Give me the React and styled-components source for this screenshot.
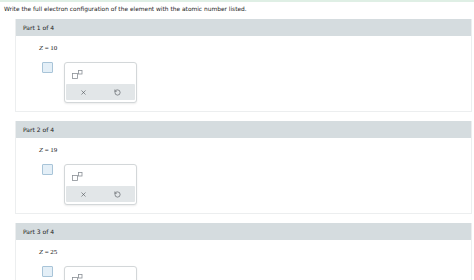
import React from "react";
import styled, { createGlobalStyle } from "styled-components";
import { X, RotateCcw } from "lucide-react";

const GlobalStyle = createGlobalStyle`
  body {
    margin: 0;
    background: #ffffff;
    font-family: "DejaVu Sans", Verdana, sans-serif;
    color: #222;
    overflow: hidden;
  }
`;

const Page = styled.div`
  width: 474px;
  height: 280px;
  overflow: hidden;
`;

const TopStrip = styled.div`
  height: 2px;
  background: #dfefe5;
`;

const Instruction = styled.div`
  font-size: 5.9px;
  line-height: 12px;
  padding-left: 4px;
  margin-top: 1px;
  color: #222;
`;

const Parts = styled.div`
  display: flex;
  flex-direction: column;
  gap: 9px;
  padding: 4px 2px 0 15px;
`;

const Card = styled.section`
  border: 1px solid #eceeef;
  border-top: none;
`;

const Header = styled.div`
  height: 17px;
  background: #d5dcdf;
  display: flex;
  align-items: center;
  padding-left: 7px;
  font-size: 6px;
  color: #222;
`;

const Body = styled.div`
  padding: 8px 0 8px 23px;
`;

const Formula = styled.div`
  font-family: "Liberation Serif", "Times New Roman", serif;
  font-size: 7px;
  line-height: 9px;
  height: 9px;

  i {
    font-style: italic;
  }
`;

const AnswerRow = styled.div`
  display: flex;
  align-items: flex-start;
  gap: 11px;
  margin-top: 9px;
  padding-left: 3px;
`;

const Check = styled.div`
  width: 9px;
  height: 9px;
  background: #e4eff7;
  border: 1px solid #a8c4d8;
  border-radius: 1px;
`;

const Popup = styled.div`
  width: 69px;
  height: 37px;
  border: 1px solid #d3d7d9;
  border-radius: 3px;
  box-shadow: 0 1px 2px rgba(0, 0, 0, 0.08);
  padding: 1px;
  display: flex;
  flex-direction: column;
  background: #fff;
`;

const IconRow = styled.div`
  height: 20px;
  display: flex;
  align-items: center;
  padding-left: 6px;
`;

const ButtonBar = styled.div`
  height: 16px;
  background: #e2e6e8;
  border-radius: 1px;
  display: flex;
  align-items: center;
  justify-content: space-between;
  padding: 0 14px;
  color: #4a4f54;
`;

const SuperIcon = () => (
  <svg width="11" height="9" viewBox="0 0 11 9">
    <rect x="0.5" y="3.5" width="5" height="5" fill="none" stroke="#8a9096" strokeWidth="0.8" />
    <rect x="6.5" y="0.5" width="3.5" height="3.5" fill="none" stroke="#8a9096" strokeWidth="0.8" />
  </svg>
);

const parts = [
  { n: 1, z: 10 },
  { n: 2, z: 19 },
  { n: 3, z: 25 },
];

const App = () => (
  <Page>
    <GlobalStyle />
    <TopStrip />
    <Instruction>
      Write the full electron configuration of the element with the atomic number listed.
    </Instruction>
    <Parts>
      {parts.map((p) => (
        <Card key={p.n}>
          <Header>Part {p.n} of 4</Header>
          <Body>
            <Formula>
              <i>Z</i> = {p.z}
            </Formula>
            <AnswerRow>
              <Check />
              <Popup>
                <IconRow>
                  <SuperIcon />
                </IconRow>
                <ButtonBar>
                  <X size={7} strokeWidth={2} />
                  <RotateCcw size={7} strokeWidth={2} />
                </ButtonBar>
              </Popup>
            </AnswerRow>
          </Body>
        </Card>
      ))}
    </Parts>
  </Page>
);

export default App;
